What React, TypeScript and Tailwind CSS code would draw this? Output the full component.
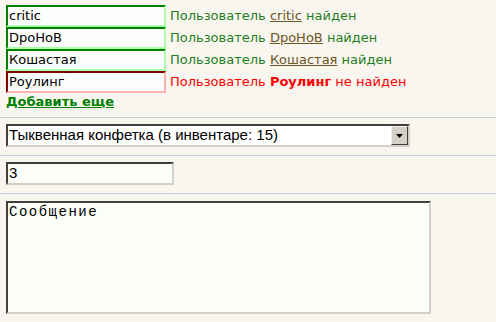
import React from "react";

const users = [
  { name: "critic", ok: true },
  { name: "DpoHoB", ok: true },
  { name: "Кошастая", ok: true },
  { name: "Роулинг", ok: false },
];

function Divider() {
  return <div className="h-px w-full bg-[#c6d3df]" />;
}

export default function App() {
  return (
    <div className="w-[496px] h-[322px] overflow-hidden bg-[#f9f6f0] font-['DejaVu_Sans',sans-serif]">
      <div className="pl-[6px] pt-[5px]">
        {users.map((u) => (
          <div key={u.name} className="flex items-center h-[22px]">
            <div
              className={
                "w-[160px] h-[22px] border-2 flex items-center pl-[1px] text-[13px] text-black bg-[#fcfffc] " +
                (u.ok
                  ? "border-t-[#008000] border-l-[#008000] border-b-[#aaffaa] border-r-[#aaffaa]"
                  : "border-t-[#800000] border-l-[#800000] border-b-[#ffb0b0] border-r-[#ffb0b0]")
              }
            >
              {u.name}
            </div>
            {u.ok ? (
              <div className="ml-[4px] text-[13px] text-[#1f7f1f] whitespace-nowrap">
                Пользователь{" "}
                <span className="underline text-[#6b5520]">{u.name}</span> найден
              </div>
            ) : (
              <div className="ml-[4px] text-[13px] text-[#ff0000] whitespace-nowrap">
                Пользователь <span className="font-bold">{u.name}</span> не найден
              </div>
            )}
          </div>
        ))}
        <div className="mt-[1px] h-[16px] leading-[16px] text-[13px] font-bold text-[#008000] underline">
          Добавить еще
        </div>
      </div>
      <div className="mt-[7px]">
        <Divider />
      </div>
      <div className="pl-[6px] mt-[6px]">
        <div className="w-[404px] h-[23px] border-2 border-t-[#404040] border-l-[#404040] border-b-[#d4d0c8] border-r-[#d4d0c8] bg-white flex items-center">
          <div className="flex-1 pl-[1px] text-[15px] text-black font-['Liberation_Sans',Arial,sans-serif] whitespace-nowrap">
            Тыквенная конфетка (в инвентаре: 15)
          </div>
          <div className="w-[17px] h-[19px] bg-[#d4d0c8] border border-t-[#f0f0f0] border-l-[#f0f0f0] border-b-[#404040] border-r-[#404040] flex items-center justify-center">
            <svg width="7" height="4" viewBox="0 0 7 4">
              <path d="M0 0H7L3.5 4Z" fill="#000" />
            </svg>
          </div>
        </div>
      </div>
      <div className="mt-[8px]">
        <Divider />
      </div>
      <div className="pl-[6px] mt-[6px]">
        <div className="w-[168px] h-[23px] border-2 border-t-[#404040] border-l-[#404040] border-b-[#d4d0c8] border-r-[#d4d0c8] bg-[#fcfefa] flex items-center pl-[1px] text-[15px] text-black font-['Liberation_Sans',Arial,sans-serif]">
          3
        </div>
      </div>
      <div className="mt-[8px]">
        <Divider />
      </div>
      <div className="pl-[6px] mt-[7px]">
        <div className="w-[425px] h-[113px] border-2 border-t-[#404040] border-l-[#404040] border-b-[#d4d0c8] border-r-[#d4d0c8] bg-[#fcfefa] pl-[1px] pt-[1px] text-[14px] leading-[17px] tracking-[1.5px] text-black font-['Liberation_Mono','Courier_New',monospace]">
          Сообщение
        </div>
      </div>
    </div>
  );
}
